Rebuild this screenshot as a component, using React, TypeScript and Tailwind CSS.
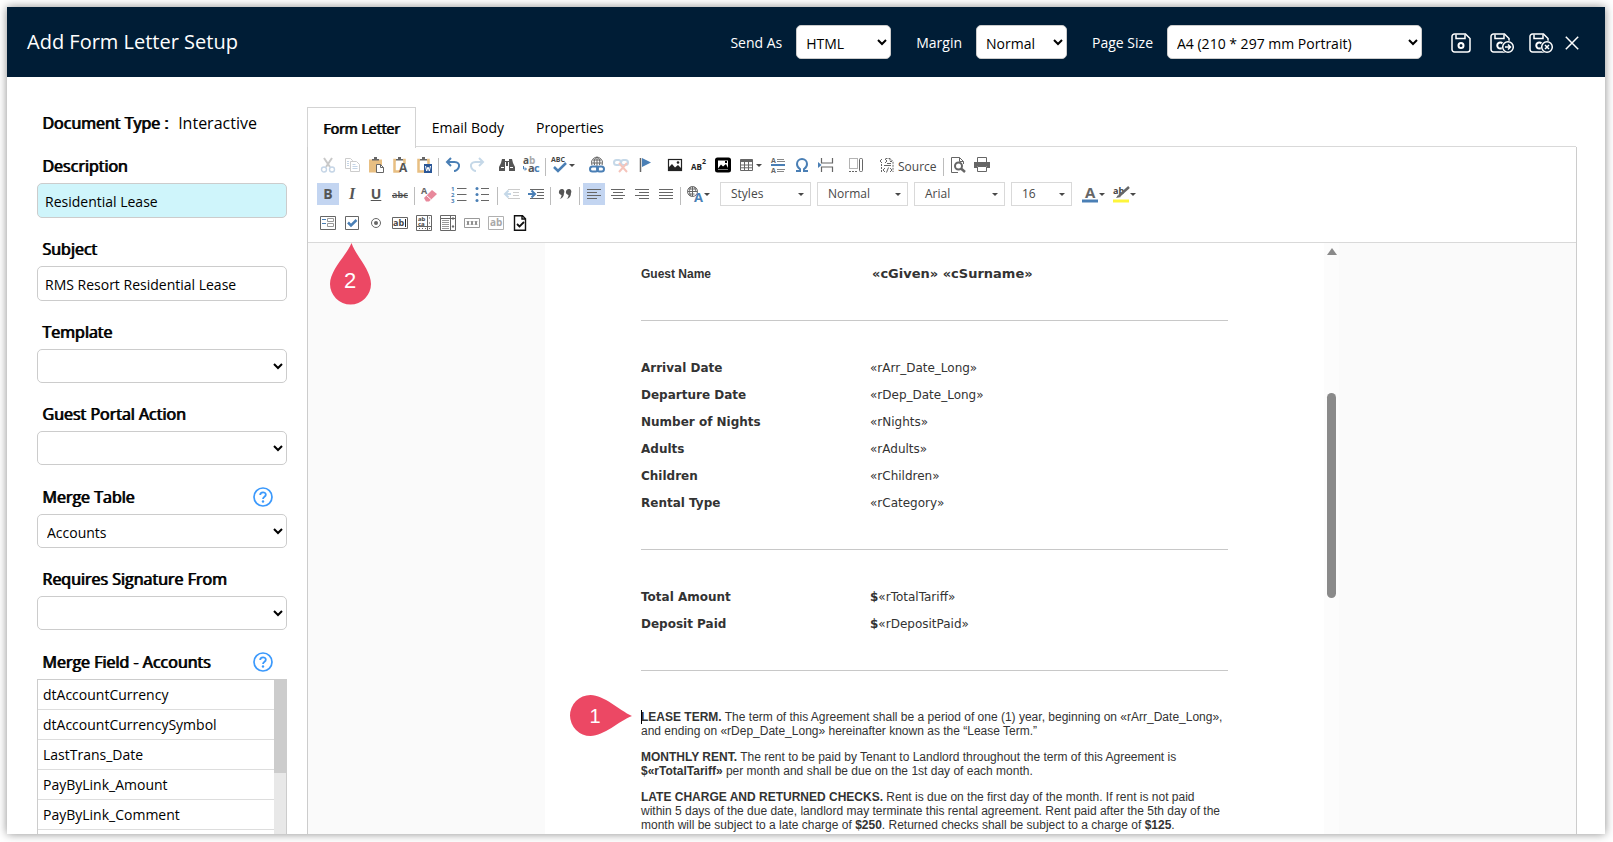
import type { ReactNode } from "react";

const GREY = "#666666";
const BLUE = "#4a7fb5";

const mergeFields = [
  "dtAccountCurrency",
  "dtAccountCurrencySymbol",
  "LastTrans_Date",
  "PayByLink_Amount",
  "PayByLink_Comment",
];

const stayRows = [
  ["Arrival Date", "«rArr_Date_Long»"],
  ["Departure Date", "«rDep_Date_Long»"],
  ["Number of Nights", "«rNights»"],
  ["Adults", "«rAdults»"],
  ["Children", "«rChildren»"],
  ["Rental Type", "«rCategory»"],
];

function Svg({ children, w = 16, h = 16 }: { children: ReactNode; w?: number; h?: number }) {
  return (
    <svg
      width={w}
      height={h}
      viewBox={`0 0 ${w} ${h}`}
      fill="none"
      stroke={GREY}
      fontFamily="Open Sans, sans-serif"
      className="block shrink-0 overflow-visible"
      aria-hidden="true"
    >
      {children}
    </svg>
  );
}

// small text used inside of the toolbar icons
function T({
  x,
  y,
  size,
  fill = GREY,
  bold = true,
  children,
}: {
  x: number;
  y: number;
  size: number;
  fill?: string;
  bold?: boolean;
  children: string;
}) {
  return (
    <text x={x} y={y} fontSize={size} fill={fill} stroke="none" fontWeight={bold ? 700 : 400}>
      {children}
    </text>
  );
}

/* ---------- toolbar icons ---------- */

const CutIcon = () => (
  <Svg>
    <path d="M4 1l6 9M12 1L6 10" stroke="#c9c9c9" strokeWidth="2" />
    <circle cx="4" cy="12.5" r="2.5" stroke="#c5d5e6" strokeWidth="1.4" />
    <circle cx="12" cy="12.5" r="2.5" stroke="#c5d5e6" strokeWidth="1.4" />
  </Svg>
);

const CopyIcon = () => (
  <Svg>
    <path d="M6.5 11.5h-5v-10h5l2 2v1" stroke="#cccccc" />
    <path d="M6.5 4.5h6l3 3v7h-9z" fill="#fff" stroke="#cccccc" />
    <path d="M3 4.5h2M3 6.5h2M3 8.5h2M8.5 7.5h3M8.5 9.5h5M8.5 11.5h5" stroke="#c5d5e6" />
  </Svg>
);

const Clipboard = ({ solid = false }: { solid?: boolean }) => (
  <>
    {solid ? (
      <path d="M1 2.500h13v13H1z" fill="#e8bf82" stroke="none" />
    ) : (
      <path d="M4 3H2.500v11.500H8M11 3h1.500v4" stroke="#e8bf82" strokeWidth="2.500" />
    )}
    <path d="M4 3.500h7V2H9V0H6v2H4z" fill={GREY} stroke="none" />
  </>
);

const PasteIcon = () => (
  <Svg>
    <Clipboard solid />
    <path d="M8.500 7.500h4l3 3v5h-7z" fill="#fff" />
    <path d="M12.500 7.500v3h3" />
  </Svg>
);

const PasteTextIcon = () => (
  <Svg>
    <Clipboard />
    <T x={7} y={15} size={12} fill="#555555">A</T>
  </Svg>
);

const PasteWordIcon = () => (
  <Svg>
    <Clipboard />
    <rect x="8" y="7" width="8" height="9" fill="#2b5797" stroke="none" />
    <path d="M9.500 9l1.200 5L12 10l1.300 4 1.200-5" stroke="#fff" />
  </Svg>
);

const UndoIcon = () => (
  <Svg>
    <path d="M2 5h7.500c3.500 0 5 2 4.500 4.500S11 14 9 14" stroke={BLUE} strokeWidth="2" />
    <path d="M6 1L2 5l4 4" stroke={BLUE} strokeWidth="2" />
  </Svg>
);

const RedoIcon = () => (
  <Svg>
    <path d="M14 5H6.500C3 5 1.500 7 2 9.500S5 14 7 14" stroke="#c5d8e8" strokeWidth="2" />
    <path d="M10 1l4 4-4 4" stroke="#c5d8e8" strokeWidth="2" />
  </Svg>
);

const FindIcon = () => (
  <Svg>
    <path
      d="M3 2h3v2h4V2h3l1 4 2 4v4h-6V9H6v5H0v-4l2-4z"
      fill="#555555"
      stroke="none"
    />
    <path d="M6.500 5v4M9.500 5v4M2 10.500h3M11 10.500h3" stroke="#fff" />
  </Svg>
);

const ReplaceIcon = () => (
  <Svg>
    <T x={0} y={7} size={10} fill="#555555">a</T>
    <T x={6} y={7} size={10} fill="#aaaaaa">b</T>
    <T x={5} y={15} size={11} fill="#555555">a</T>
    <T x={11} y={15} size={11} fill={BLUE}>c</T>
    <path d="M.5 9v3H3M2 10.500l1.500 1.500L2 13.500" stroke={BLUE} />
  </Svg>
);

const SpellIcon = () => (
  <Svg>
    <T x={-1} y={5} size={7} fill="#444444">ABC</T>
    <path d="M2 10l4 4 8-8" stroke={BLUE} strokeWidth="2.500" />
  </Svg>
);

const Chain = ({ stroke }: { stroke: string }) => (
  <>
    <rect x="1" y="9.500" width="8" height="5" rx="2.500" stroke={stroke} strokeWidth="2" />
    <rect x="8" y="9.500" width="7" height="5" rx="2.500" stroke={stroke} strokeWidth="2" />
  </>
);

const LinkIcon = () => (
  <Svg>
    <path d="M3 8a5.500 5.500 0 1 1 10 0M2.500 6h11M4 3h8M8 0v9M5.500 8c-1-4 0-7 2.500-8 2.500 1 3.500 4 2.500 8" />
    <Chain stroke={BLUE} />
  </Svg>
);

const UnlinkIcon = () => (
  <Svg>
    <rect x="1" y="3" width="7" height="5" rx="2.500" stroke="#c5d8e8" strokeWidth="2" />
    <rect x="8" y="3" width="7" height="5" rx="2.500" stroke="#c5d8e8" strokeWidth="2" />
    <path d="M6 6l8 9M14 6l-8 9" stroke="#f5c4bb" strokeWidth="2" />
  </Svg>
);

const AnchorIcon = () => (
  <Svg>
    <path d="M3.500 1v14" strokeWidth="1.500" />
    <path d="M5 1l9 4.500L5 10z" fill={BLUE} stroke="none" />
  </Svg>
);

const ImageIcon = () => (
  <Svg>
    <rect x="1.500" y="2.500" width="13" height="11" stroke="#222222" strokeWidth="1.200" />
    <path d="M2 13v-3l3-3 3 3.500L11 8l3 3v2z" fill="#222222" stroke="none" />
    <circle cx="11" cy="5.500" r="1.300" fill="#222222" stroke="none" />
  </Svg>
);

const ReplaceImageIcon = () => (
  <Svg>
    <rect x="1.500" y="2" width="13" height="12" stroke="#000000" strokeWidth="3" rx="1" />
    <path d="M3 11.500l3-4 2 2 3-2.500 2 4v1H3z" fill="#000000" stroke="none" />
    <rect x="10" y="4" width="2" height="2" fill="#000000" stroke="none" />
  </Svg>
);

const SupIcon = () => (
  <Svg>
    <T x={0} y={13} size={8} fill="#222222">AB</T>
    <T x={11} y={7} size={7} fill="#222222">2</T>
  </Svg>
);

const TableIcon = () => (
  <Svg>
    <path d="M1.500 2.500h12v11h-12zM1.500 8h12M1.500 10.800h12M5.500 5v8.500M9.500 5v8.500" />
    <path d="M1.500 3.800h12" strokeWidth="2.500" />
  </Svg>
);

const HrIcon = () => (
  <Svg>
    <path d="M1 8h14" stroke={BLUE} strokeWidth="2" />
    <path d="M7 2.500h7M7 4.500h8M7 12.500h8M7 14.500h7" stroke="#888888" />
    <T x={1} y={6} size={7}>A</T>
    <T x={1} y={16} size={7}>A</T>
  </Svg>
);

const OmegaIcon = () => (
  <Svg>
    <path
      d="M2 14h4v-2C3.500 10.500 3 9 3 7a5 5 0 0 1 10 0c0 2-.5 3.500-3 5v2h4"
      stroke={BLUE}
      strokeWidth="2"
    />
  </Svg>
);

const PageBreakIcon = () => (
  <Svg>
    <path d="M3.500 1v5h11V1M3.500 15v-5h11v5" strokeWidth="1.200" />
    <path d="M0 5l3.500 3L0 11z" fill={BLUE} stroke="none" />
  </Svg>
);

const BlocksIcon = () => (
  <Svg>
    <rect x="1.500" y="1.500" width="8" height="10" strokeDasharray="1 1" />
    <rect x="11.500" y="1.500" width="3" height="13" rx="1" />
    <path d="M1 14.500h8" strokeDasharray="2 1" />
  </Svg>
);

const SourceIcon = () => (
  <Svg>
    <path d="M6.500 1.500H11l3 3V15M11 1.500v3h3M2.500 7v8" strokeDasharray="2 1" />
    <path d="M3 2L1 4l2 2M6 2l2 2-2 2M6 11l-2 2 2 2M11 11l2 2-2 2M9.500 10.500l-2 5M5 8.500h7M8 6.500h4" />
  </Svg>
);

const PreviewIcon = () => (
  <Svg>
    <path d="M8 15.500H1.500V.5h8l4 4V7M9.500.5v4h4" />
    <circle cx="8.500" cy="9" r="3.500" strokeWidth="2" />
    <path d="M11 11.500l4 3.500" strokeWidth="2.500" />
  </Svg>
);

const PrintIcon = () => (
  <Svg>
    <path d="M3.500 5V.5h9V5" />
    <path d="M0 5h16v6h-3V9H3v2H0z" fill={GREY} stroke="none" />
    <path d="M3.500 9.500h9v5h-9z" fill="#fff" />
  </Svg>
);

const StrikeIcon = () => (
  <Svg>
    <T x={0} y={12} size={9}>abc</T>
    <path d="M0 9.500h16" stroke="#444444" />
  </Svg>
);

const EraserIcon = () => (
  <Svg>
    <T x={0} y={8} size={9}>A</T>
    <path d="M3 12l8-8 5 4-8 7.500H5z" fill="#e8889b" stroke="none" />
    <path d="M5.500 9.500l4.500 4" stroke="#fff" />
  </Svg>
);

const NumListIcon = () => (
  <Svg>
    <path d="M6 2.500h9.500M6 8.500h9.500M6 14.500h9.500" />
    <T x={0} y={5} size={6} fill={BLUE}>1</T>
    <T x={0} y={11} size={6} fill={BLUE}>2</T>
    <T x={0} y={17} size={6} fill={BLUE}>3</T>
  </Svg>
);

const BulletListIcon = () => (
  <Svg>
    <path d="M6 2.500h8M6 8.500h8M6 14.500h8" />
    <circle cx="2" cy="2.500" r="1.500" fill={BLUE} stroke="none" />
    <circle cx="2" cy="8.500" r="1.500" fill={BLUE} stroke="none" />
    <circle cx="2" cy="14.500" r="1.500" fill={BLUE} stroke="none" />
  </Svg>
);

const OutdentIcon = () => (
  <Svg>
    <path d="M4 3.500h12M9 6.500h6M9 9.500h6M4 12.500h12" stroke="#cccccc" />
    <path d="M1 8h6M4.500 4.500L1 8l3.500 3.500" stroke="#c5d8e8" strokeWidth="2" />
  </Svg>
);

const IndentIcon = () => (
  <Svg>
    <path d="M2 3.500h14M9 6.500h7M9 9.500h7M2 12.500h14" />
    <path d="M0 8h6M3.500 4.500L7 8l-3.500 3.500" stroke={BLUE} strokeWidth="2" />
  </Svg>
);

const QuoteIcon = () => (
  <Svg>
    <path
      d="M2 5.500a2.700 2.700 0 1 1 5 1.500c0 3-1.500 5.500-4.500 6 1.500-1 2-2.500 2-4A2.700 2.700 0 0 1 2 5.500zM9 5.500A2.700 2.700 0 1 1 14 7c0 3-1.500 5.500-4.500 6 1.500-1 2-2.500 2-4A2.700 2.700 0 0 1 9 5.500z"
      fill="#555555"
      stroke="none"
    />
  </Svg>
);

const AlignLeftIcon = () => (
  <Svg>
    <path d="M1 3.500h14M1 6.500h10M1 9.500h14M1 12.500h10" />
  </Svg>
);

const AlignCenterIcon = () => (
  <Svg>
    <path d="M1 3.500h14M3 6.500h10M1 9.500h14M3 12.500h10" />
  </Svg>
);

const AlignRightIcon = () => (
  <Svg>
    <path d="M1 3.500h14M5 6.500h10M1 9.500h14M5 12.500h10" />
  </Svg>
);

const JustifyIcon = () => (
  <Svg>
    <path d="M1 3.500h14M1 6.500h14M1 9.500h14M1 12.500h14" />
  </Svg>
);

const LanguageIcon = () => (
  <Svg>
    <circle cx="5.500" cy="5.500" r="5" />
    <path d="M.5 5.500h10M1.500 3h8M1.500 8h6M5.500.5v10M4 10C2 7 2 4 4 1M7 1c1.500 2 1.700 3 1.700 5" />
    <T x={7} y={16} size={13} fill={BLUE}>A</T>
  </Svg>
);

const FormIcon = () => (
  <Svg>
    <path d="M.5 1.500h15v13H.5z" />
    <path d="M2 4.500h4M2 8.500h4" stroke={BLUE} />
    <path d="M7.500 3.500h6v3h-6zM7.500 8.500h6v3h-6z" stroke="#999999" />
  </Svg>
);

const CheckboxIcon = () => (
  <Svg>
    <path d="M1.500 1.500h13v13h-13z" />
    <path d="M4 7.500l3 3 5.500-5.500" stroke={BLUE} strokeWidth="2.500" />
  </Svg>
);

const RadioIcon = () => (
  <Svg>
    <circle cx="8" cy="8" r="4.500" />
    <circle cx="8" cy="8" r="2" fill={GREY} stroke="none" />
  </Svg>
);

const TextFieldIcon = () => (
  <Svg>
    <path d="M.5 2.500h15v11H.5z" />
    <T x={1} y={11} size={9} fill="#444444">ab</T>
    <path d="M13.500 4v8" stroke="#222222" />
  </Svg>
);

const TextareaIcon = () => (
  <Svg>
    <path d="M.5.5h15v15H.5zM11.500.5v15M.5 11.500h15" />
    <path d="M13 3h1M13 8h1M3 13.500h1M6 13.500h1M9 13.500h1M13 13.500h1" />
    <T x={2} y={6} size={6} fill="#444444">ab</T>
    <T x={2} y={11} size={6} fill="#444444">ca</T>
  </Svg>
);

const SelectFieldIcon = () => (
  <Svg>
    <path d="M.5.5h15v3H.5zM.5 3.500h10v12H.5zM10.500.5h5v15h-5z" />
    <path d="M2 5.500h7M2 7.500h7M2 9.500h7M2 11.500h7M2 13.500h7" stroke="#999999" />
    <path d="M12 4l1-1.500L14 4zM12 11l1 1.500 1-1.500z" fill={GREY} />
  </Svg>
);

const ButtonFieldIcon = () => (
  <Svg>
    <path d="M.5 3.500h15v9H.5z" stroke="#999999" />
    <path d="M3 6l2 4M5 6l-2 4M7 6l2 4M9 6l-2 4M11 6l2 4M13 6l-2 4" stroke="#777777" />
  </Svg>
);

const HiddenFieldIcon = () => (
  <Svg>
    <path d="M.5 1.500h15v13H.5z" stroke="#b0b0b0" />
    <T x={2} y={11} size={10} fill="#a8a8a8">ab</T>
  </Svg>
);

const SignatureIcon = () => (
  <Svg>
    <path d="M2.500.7h8l3 3v11.600h-11zM10 1v3h3.500" stroke="#111111" strokeWidth="1.400" />
    <path d="M5 9l2.500 2.500L12 7" stroke="#111111" strokeWidth="1.800" />
  </Svg>
);

const TextColorIcon = () => (
  <Svg>
    <T x={3} y={12} size={15}>A</T>
    <path d="M0 15h16" stroke={BLUE} strokeWidth="3" />
  </Svg>
);

const BgColorIcon = () => (
  <Svg>
    <T x={0} y={8} size={9} fill="#444444">ab</T>
    <path d="M16 1L6 10" strokeWidth="2.500" />
    <path d="M3 12l2-3 3 2z" fill={GREY} stroke="none" />
    <path d="M0 15h16" stroke="#fdf53c" strokeWidth="3" />
  </Svg>
);

/* ---------- header icons ---------- */

const Floppy = () => (
  <>
    <path d="M3.500 1h11L19 5.500v11a2.500 2.500 0 0 1-2.500 2.500h-13A2.500 2.500 0 0 1 1 16.500v-13A2.500 2.500 0 0 1 3.500 1z" />
    <path d="M5 1.500v4h9v-4" />
  </>
);

const SaveIcon = () => (
  <svg width="20" height="20" viewBox="0 0 20 20" fill="none" stroke="#fff" strokeWidth="1.500" aria-hidden="true">
    <Floppy />
    <circle cx="10" cy="12.500" r="2.500" strokeWidth="2" />
  </svg>
);

function SaveWithBadge({ children }: { children: ReactNode }) {
  return (
    <svg width="24" height="20" viewBox="0 0 24 20" fill="none" stroke="#fff" strokeWidth="1.500" className="overflow-visible" aria-hidden="true">
      <Floppy />
      <path d="M12.500 10.500a3 3 0 1 0 0 4" strokeWidth="2" />
      <circle cx="18" cy="14" r="6.500" fill="#001d36" stroke="none" />
      <circle cx="18" cy="14" r="5.300" />
      {children}
    </svg>
  );
}

const HelpIcon = () => (
  <svg width="20" height="20" viewBox="0 0 20 20" fill="none" stroke="#3b99fc" strokeWidth="2" aria-hidden="true">
    <circle cx="10" cy="10" r="9" strokeWidth="1.700" />
    <path d="M7.200 8c0-3.500 5.600-3.500 5.600-.3 0 2-2.800 2-2.800 4.300" strokeWidth="1.800" />
    <circle cx="10" cy="14.500" r="1.200" fill="#3b99fc" stroke="none" />
  </svg>
);

/* ---------- toolbar parts ---------- */

function Caret() {
  return <span className="border-x-[3px] border-t-[3px] border-x-transparent border-t-[#484848]" />;
}

function Tool({
  label,
  active,
  menu,
  children,
}: {
  label: string;
  active?: boolean;
  menu?: boolean;
  children: ReactNode;
}) {
  return (
    <button
      type="button"
      aria-label={label}
      className={
        "mx-px flex h-[22px] items-center px-[3px] text-[#555] " +
        (menu ? "w-[29px] gap-px " : "w-[22px] justify-center ") +
        (active ? "bg-[#c3d5f1]" : "")
      }
    >
      {children}
      {menu && <Caret />}
    </button>
  );
}

function Divider() {
  return <span className="mx-0.5 mt-1 h-[18px] w-px bg-[#bcbcbc]" />;
}

function Group({ children }: { children: ReactNode }) {
  return <div className="flex items-center">{children}</div>;
}

function Combo({ value, label, narrow }: { value: string; label: string; narrow?: boolean }) {
  return (
    <button
      type="button"
      aria-label={label}
      className={
        "flex h-6 items-center justify-between border border-[#d9d9d9] pr-1.5 pl-2.5 text-xs text-[#484848] " +
        (narrow ? "w-[61px]" : "w-[91px]")
      }
    >
      {value}
      <Caret />
    </button>
  );
}

/* ---------- form parts ---------- */

const heavy = "[text-shadow:1px_0_0_#000] ";
const fieldBox = "block w-full rounded-[5px] border border-[#ccc] pt-0.5 text-sm text-black ";

function Label({ id, help, children }: { id: string; help?: boolean; children: ReactNode }) {
  return (
    <div className={"flex items-center justify-between pr-3.5 pl-[5px] pt-3.5 " + (help ? "h-[49px]" : "h-12")}>
      <label htmlFor={id} className={heavy + "text-base text-black"}>
        {children}
      </label>
      {help && (
        <button type="button" aria-label="Help">
          <HelpIcon />
        </button>
      )}
    </div>
  );
}

function SideSelect({ id, value = "" }: { id: string; value?: string }) {
  return (
    <select id={id} defaultValue={value} className={fieldBox + "h-[34px] bg-white px-[5px]"}>
      <option>{value}</option>
    </select>
  );
}

function HeaderSelect({ id, label, value, width }: { id: string; label: string; value: string; width: string }) {
  return (
    <div className="flex items-center gap-3.5">
      <label htmlFor={id} className="pt-0.5 text-sm text-white">
        {label}
      </label>
      <select
        id={id}
        defaultValue={value}
        className={"h-[34px] rounded-[5px] border border-[#ccc] bg-white px-[5px] pt-0.5 text-sm text-black " + width}
      >
        <option>{value}</option>
      </select>
    </div>
  );
}

function Header() {
  return (
    <header className="flex h-[70px] shrink-0 items-center justify-between bg-[#001d36] pr-[26px] pl-5 text-white">
      <h1 className="text-xl">Add Form Letter Setup</h1>
      <div className="flex items-center">
        <div className="flex items-center gap-[25px]">
          <HeaderSelect id="sendAs" label="Send As" value="HTML" width="w-[95px]" />
          <HeaderSelect id="margin" label="Margin" value="Normal" width="w-[91px]" />
          <HeaderSelect id="pageSize" label="Page Size" value="A4 (210 * 297 mm Portrait)" width="w-[255px]" />
        </div>
        <div className="ml-[29px] flex items-center pt-px">
          <button type="button" aria-label="Save" className="mr-[19px]">
            <SaveIcon />
          </button>
          <button type="button" aria-label="Save and continue" className="mr-[15px]">
            <SaveWithBadge>
              <path d="M15 14h5.500M18 11.500l2.500 2.500-2.500 2.500" />
            </SaveWithBadge>
          </button>
          <button type="button" aria-label="Save and close" className="mr-3">
            <SaveWithBadge>
              <path d="M16 12l4 4M20 12l-4 4" />
            </SaveWithBadge>
          </button>
          <button type="button" aria-label="Close">
            <svg width="14" height="14" viewBox="0 0 14 14" stroke="#fff" strokeWidth="1.500" aria-hidden="true">
              <path d="M.8.8l12.400 12.400M13.200.8L.8 13.200" />
            </svg>
          </button>
        </div>
      </div>
    </header>
  );
}

function Sidebar() {
  return (
    <aside className="flex w-[300px] shrink-0 flex-col overflow-hidden pt-[34px] pr-5 pl-[30px]">
      <p className="flex gap-2.5 pl-[5px] text-base text-black">
        <span className={heavy}>Document Type :</span>
        <span>Interactive</span>
      </p>
      <Label id="description">Description</Label>
      <input id="description" defaultValue="Residential Lease" className={fieldBox + "h-[35px] shrink-0 bg-[#cff5fb] px-[7px]"} />
      <Label id="subject">Subject</Label>
      <input id="subject" defaultValue="RMS Resort Residential Lease" className={fieldBox + "h-[35px] shrink-0 bg-white px-[7px]"} />
      <Label id="template">Template</Label>
      <SideSelect id="template" />
      <Label id="portalAction">Guest Portal Action</Label>
      <SideSelect id="portalAction" />
      <Label id="mergeTable" help>
        Merge Table
      </Label>
      <SideSelect id="mergeTable" value="Accounts" />
      <Label id="signature">Requires Signature From</Label>
      <SideSelect id="signature" />
      <Label id="mergeField" help>
        Merge Field - Accounts
      </Label>
      <div className="flex min-h-0 flex-1 overflow-hidden border border-b-0 border-[#ccc]">
        <ul id="mergeField" className="flex-1 text-sm text-black">
          {mergeFields.map((field) => (
            <li key={field} className="flex h-[30px] items-center border-b border-[#ddd] pt-px pl-[5px]">
              {field}
            </li>
          ))}
        </ul>
        <div className="w-3 bg-[#e8e8e8]">
          <div className="h-[93px] bg-[#ccc]" />
        </div>
      </div>
    </aside>
  );
}

function Tabs() {
  return (
    <div role="tablist" className="flex h-10 shrink-0 text-sm text-black">
      <button
        type="button"
        role="tab"
        aria-selected="true"
        className={heavy + "-mb-px border border-b-0 border-[#d3d3d3] bg-white px-[15px] pt-px"}
      >
        Form Letter
      </button>
      <button type="button" role="tab" aria-selected="false" className="px-4 pt-0.5">
        Email Body
      </button>
      <button type="button" role="tab" aria-selected="false" className="px-4 pt-0.5">
        Properties
      </button>
    </div>
  );
}

function Toolbar() {
  return (
    <div className="flex shrink-0 flex-col gap-[5px] border-b border-[#d9d9d9] pt-1.5 pb-[7px] pl-2">
      <div className="flex h-6 items-center gap-1.5">
        <Group>
          <Tool label="Cut"><CutIcon /></Tool>
          <Tool label="Copy"><CopyIcon /></Tool>
          <Tool label="Paste"><PasteIcon /></Tool>
          <Tool label="Paste as plain text"><PasteTextIcon /></Tool>
          <Tool label="Paste from Word"><PasteWordIcon /></Tool>
          <Divider />
          <Tool label="Undo"><UndoIcon /></Tool>
          <Tool label="Redo"><RedoIcon /></Tool>
        </Group>
        <Group>
          <Tool label="Find"><FindIcon /></Tool>
          <Tool label="Replace"><ReplaceIcon /></Tool>
          <Divider />
          <Tool label="Spell check" menu><SpellIcon /></Tool>
        </Group>
        <Group>
          <Tool label="Link"><LinkIcon /></Tool>
          <Tool label="Unlink"><UnlinkIcon /></Tool>
          <Tool label="Anchor"><AnchorIcon /></Tool>
        </Group>
        <Group>
          <Tool label="Image"><ImageIcon /></Tool>
          <Tool label="Superscript"><SupIcon /></Tool>
          <Tool label="Replace image"><ReplaceImageIcon /></Tool>
          <Tool label="Table" menu><TableIcon /></Tool>
          <Tool label="Horizontal line"><HrIcon /></Tool>
          <Tool label="Special character"><OmegaIcon /></Tool>
          <Tool label="Page break"><PageBreakIcon /></Tool>
        </Group>
        <Group>
          <Tool label="Show blocks"><BlocksIcon /></Tool>
        </Group>
        <Group>
          <button type="button" className="flex h-[22px] items-center gap-[3px] pr-1 pl-[5px] text-xs text-[#484848]">
            <SourceIcon />
            <span className="pt-1">Source</span>
          </button>
          <Divider />
          <Tool label="Preview"><PreviewIcon /></Tool>
          <Tool label="Print"><PrintIcon /></Tool>
        </Group>
      </div>

      <div className="flex h-6 items-center gap-1.5">
        <Group>
          <Tool label="Bold" active><b className="text-sm">B</b></Tool>
          <Tool label="Italic"><i className="font-['Liberation_Serif',serif] text-base font-bold">I</i></Tool>
          <Tool label="Underline"><u className="text-sm font-bold">U</u></Tool>
          <Tool label="Strikethrough"><StrikeIcon /></Tool>
          <Divider />
          <Tool label="Remove format"><EraserIcon /></Tool>
        </Group>
        <Group>
          <Tool label="Numbered list"><NumListIcon /></Tool>
          <Tool label="Bulleted list"><BulletListIcon /></Tool>
          <Divider />
          <Tool label="Outdent"><OutdentIcon /></Tool>
          <Tool label="Indent"><IndentIcon /></Tool>
          <Divider />
          <Tool label="Block quote"><QuoteIcon /></Tool>
          <Divider />
          <Tool label="Align left" active><AlignLeftIcon /></Tool>
          <Tool label="Center"><AlignCenterIcon /></Tool>
          <Tool label="Align right"><AlignRightIcon /></Tool>
          <Tool label="Justify"><JustifyIcon /></Tool>
          <Divider />
          <Tool label="Language" menu><LanguageIcon /></Tool>
        </Group>
        <Combo label="Styles" value="Styles" />
        <Combo label="Paragraph format" value="Normal" />
        <Combo label="Font" value="Arial" />
        <Combo label="Font size" value="16" narrow />
        <Group>
          <Tool label="Text color" menu><TextColorIcon /></Tool>
          <Tool label="Background color" menu><BgColorIcon /></Tool>
        </Group>
      </div>

      <div className="flex h-6 items-center">
        <Tool label="Form"><FormIcon /></Tool>
        <div className="relative">
          <Tool label="Checkbox"><CheckboxIcon /></Tool>
          <div className="absolute top-[31px] -left-2.5 z-10">
            <svg width="41" height="62" viewBox="0 0 41 62" aria-hidden="true">
              <path d="M21.500 0C26 13 41 27 41 41a20.500 20.500 0 0 1-41 0C0 27 16 13 21.500 0z" fill="#ec4864" />
              <text x="20" y="45" fontSize="22" textAnchor="middle" fill="#fff" fontFamily="Liberation Sans, sans-serif">2</text>
            </svg>
          </div>
        </div>
        <Tool label="Radio button"><RadioIcon /></Tool>
        <Tool label="Text field"><TextFieldIcon /></Tool>
        <Tool label="Textarea"><TextareaIcon /></Tool>
        <Tool label="Selection field"><SelectFieldIcon /></Tool>
        <Tool label="Button"><ButtonFieldIcon /></Tool>
        <Tool label="Hidden field"><HiddenFieldIcon /></Tool>
        <Tool label="Signature"><SignatureIcon /></Tool>
      </div>
    </div>
  );
}

function Rule() {
  return <hr className="border-[#c8c8c8]" />;
}

function Letter() {
  return (
    <div className="min-w-0 flex-1 px-24 font-['DejaVu_Sans',Verdana,sans-serif] text-xs text-[#333]">
      <table className="mt-[17px] mb-[33px] w-full">
        <tbody>
          <tr className="h-[27px]">
            <th className="w-[229px] text-left font-['Liberation_Sans',Arial,sans-serif] font-bold">Guest Name</th>
            <td className="pl-0.5 text-[13px] font-bold">«cGiven» «cSurname»</td>
          </tr>
        </tbody>
      </table>
      <Rule />
      <table className="my-[33px] w-full">
        <tbody>
          {stayRows.map(([name, value]) => (
            <tr key={name} className="h-[27px]">
              <th className="w-[229px] text-left font-bold">{name}</th>
              <td>{value}</td>
            </tr>
          ))}
        </tbody>
      </table>
      <Rule />
      <table className="my-[33px] w-full">
        <tbody>
          <tr className="h-[27px]">
            <th className="w-[229px] text-left font-bold">Total Amount</th>
            <td><b>$</b>«rTotalTariff»</td>
          </tr>
          <tr className="h-[27px]">
            <th className="w-[229px] text-left font-bold">Deposit Paid</th>
            <td><b>$</b>«rDepositPaid»</td>
          </tr>
        </tbody>
      </table>
      <Rule />
      <div className="mt-[39px] space-y-3 font-['Liberation_Sans',Arial,sans-serif] leading-[14px]">
        <p className="relative">
          <span className="absolute top-0 left-0 h-3.5 w-px bg-black" />
          <span className="absolute -top-[15px] -left-[71px]">
            <svg width="62" height="41" viewBox="0 0 62 41" aria-hidden="true">
              <path d="M62 21C49 15 34 0 20.500 0a20.500 20.500 0 0 0 0 41C34 41 49 26 62 21z" fill="#ec4864" />
              <text x="25" y="28" fontSize="20" textAnchor="middle" fill="#fff">1</text>
            </svg>
          </span>
          <b>LEASE TERM.</b> The term of this Agreement shall be a period of one (1) year, beginning on «rArr_Date_Long»,
          and ending on «rDep_Date_Long» hereinafter known as the “Lease Term.”
        </p>
        <p>
          <b>MONTHLY RENT.</b> The rent to be paid by Tenant to Landlord throughout the term of this Agreement is{" "}
          <b>$«rTotalTariff»</b> per month and shall be due on the 1st day of each month.
        </p>
        <p>
          <b>LATE CHARGE AND RETURNED CHECKS.</b> Rent is due on the first day of the month. If rent is not paid within 5
          days of the due date, landlord may terminate this rental agreement. Rent paid after the 5th day of the month
          will be subject to a late charge of <b>$250</b>. Returned checks shall be subject to a charge of <b>$125</b>.
        </p>
      </div>
    </div>
  );
}

function Editor() {
  return (
    <main className="mr-7 flex min-w-0 flex-1 flex-col pt-[30px]">
      <Tabs />
      <div className="flex min-h-0 flex-1 flex-col border-x border-[#ccc]">
        {/* top line starts where the active tab ends */}
        <div className="-mt-px ml-[108px] h-px shrink-0 bg-[#d9d9d9]" />
        <Toolbar />
        <div className="min-h-0 flex-1 overflow-hidden bg-[#fafafa]">
          <div className="mx-auto flex h-full w-[794px] max-w-full bg-white">
            <Letter />
            <div className="flex w-[15px] flex-col items-center bg-[#fcfcfc] pt-[5px]">
              <span className="border-x-[5px] border-b-[7px] border-x-transparent border-b-[#8a8a8a]" />
              <span className="mt-[138px] h-[205px] w-[9px] rounded-full bg-[#8a8a8a]" />
            </div>
          </div>
        </div>
      </div>
    </main>
  );
}

export default function App() {
  return (
    <div className="h-screen overflow-hidden bg-white pt-[7px] pr-2 pb-2 pl-[7px] font-['Open_Sans',sans-serif]">
      <div className="flex h-full flex-col overflow-hidden bg-white shadow-[0_0_9px_rgba(0,0,0,0.45)]">
        <Header />
        <div className="flex min-h-0 flex-1">
          <Sidebar />
          <Editor />
        </div>
      </div>
    </div>
  );
}
